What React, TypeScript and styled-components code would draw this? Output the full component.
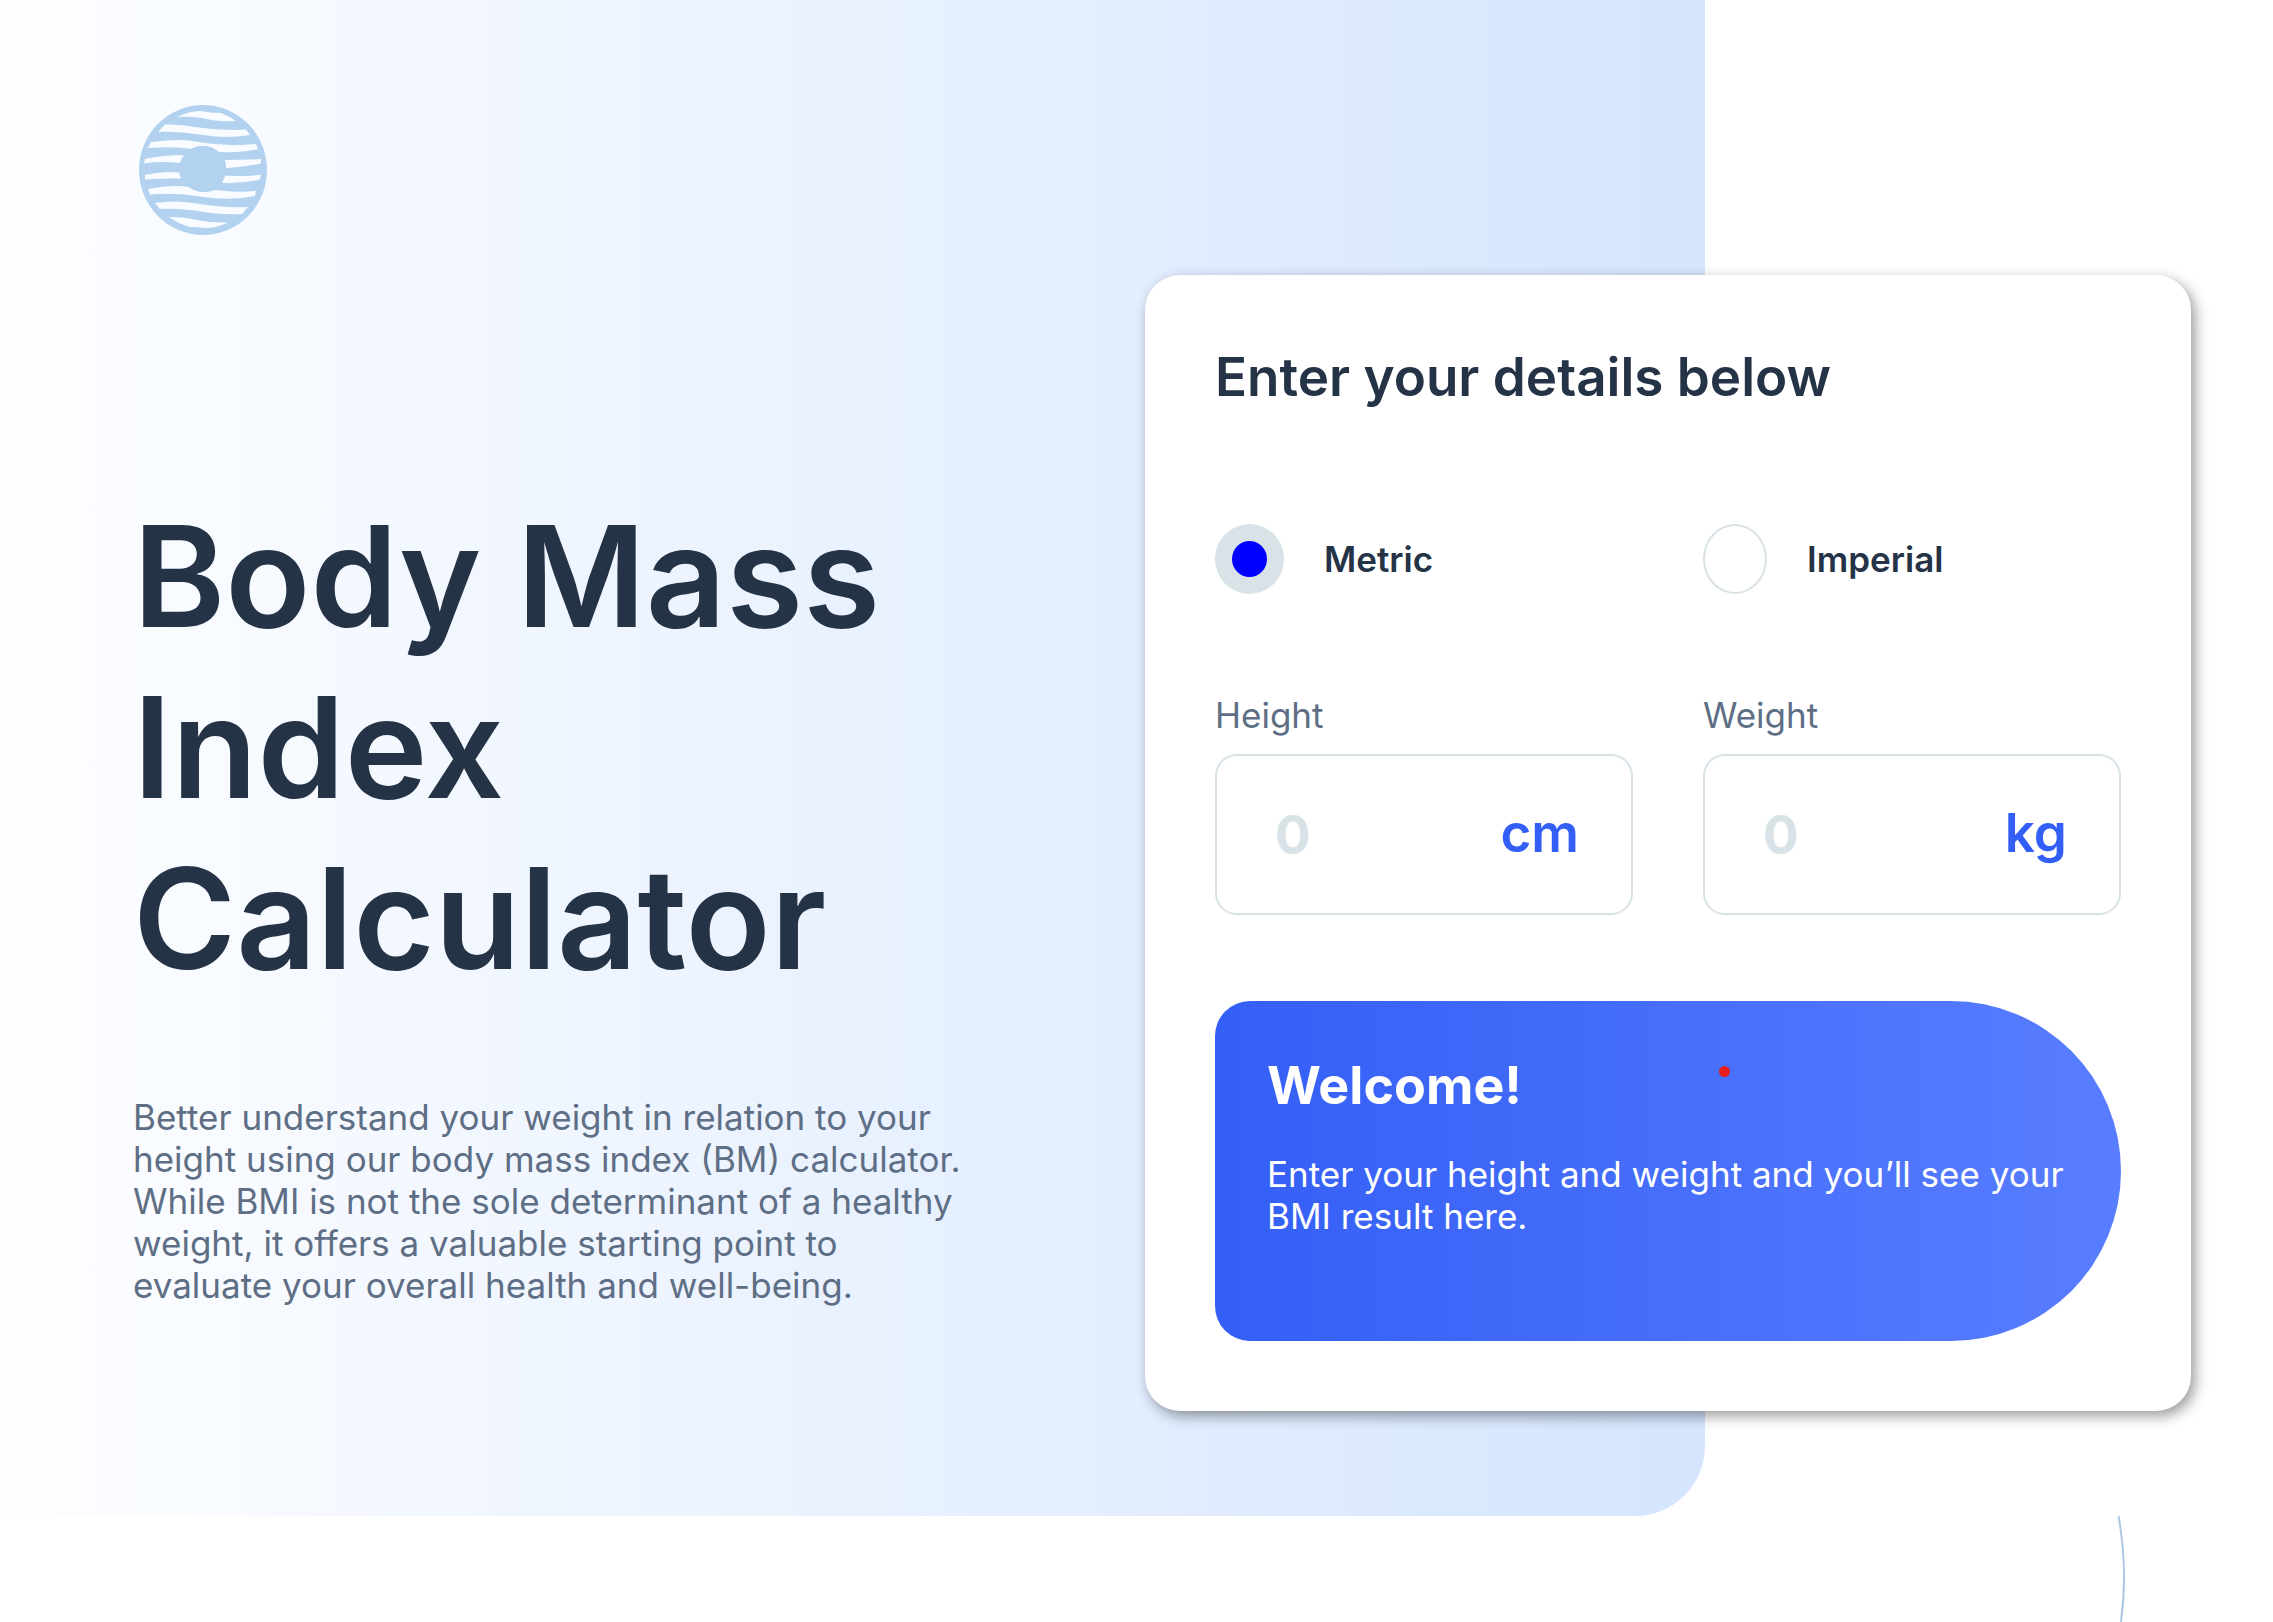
import React, { useState } from "react";
import styled, { createGlobalStyle } from "styled-components";

const ink = "#253347";
const muted = "#5e6e85";
const line = "#d8e2e7";
const blue = "#345ff6";

const GlobalStyle = createGlobalStyle`
  *, *::before, *::after { box-sizing: border-box; }
  body {
    margin: 0;
    background: #fff;
    color: ${ink};
    font-family: Inter, "Liberation Sans", sans-serif;
    font-size: 35px;
    line-height: 42px;
  }
  h1, h2, p, fieldset { margin: 0; padding: 0; border: 0; }
`;

const Page = styled.div`
  min-height: 100vh;
  display: flex;
  flex-direction: column;
`;

const Hero = styled.main`
  display: grid;
`;

const Backdrop = styled.div`
  grid-area: 1 / 1;
  width: 75%;
  border-radius: 0 0 70px 0;
  background: linear-gradient(to right, #fdfeff, #d5e5fe);
`;

const Content = styled.div`
  grid-area: 1 / 1;
  display: grid;
  grid-template-columns: minmax(0, 1012fr) minmax(0, 1046fr);
  padding: 105px 82px 105px 133px;
`;

const Intro = styled.section`
  display: flex;
  flex-direction: column;
  align-items: flex-start;
`;

const Logo = styled.svg`
  width: 140px;
  height: 130px;
`;

const Title = styled.h1`
  max-width: 840px;
  margin-top: 256px;
  font-size: 140px;
  font-weight: 600;
  line-height: 171px;
`;

const Lead = styled.p`
  max-width: 840px;
  margin-top: 92px;
  color: ${muted};
`;

const Card = styled.form`
  margin-top: 170px;
  padding: 70px;
  border-radius: 35px;
  background: #fff;
  box-shadow: 4px 5px 14px rgba(0, 0, 0, 0.4);
`;

const CardTitle = styled.h2`
  font-size: 53px;
  font-weight: 600;
  line-height: 64px;
`;

const Columns = styled.fieldset`
  display: grid;
  grid-template-columns: repeat(2, minmax(0, 1fr));
  column-gap: 70px;
`;

const Units = styled(Columns)`
  margin-top: 115px;
`;

const Measures = styled(Columns)`
  margin-top: 100px;
`;

const Option = styled.label`
  display: flex;
  align-items: center;
  gap: 40px;
  font-weight: 600;
`;

const Radio = styled.input`
  appearance: none;
  width: 64px;
  height: 70px;
  margin: 0;
  border: 2px solid ${line};
  border-radius: 50%;
  &:checked {
    width: 69px;
    border: 17px solid ${line};
    background: #00f;
  }
`;

const Field = styled.div`
  display: flex;
  flex-direction: column;
  gap: 18px;
`;

const FieldLabel = styled.label`
  color: ${muted};
`;

const Box = styled.div`
  display: flex;
  align-items: center;
  height: 161px;
  padding: 0 52px 0 58px;
  border: 2px solid ${line};
  border-radius: 22px;
`;

const NumberInput = styled.input`
  flex: 1;
  min-width: 0;
  padding: 0;
  border: 0;
  outline: 0;
  background: none;
  color: ${ink};
  font: 700 53px/64px Inter, "Liberation Sans", sans-serif;
  &::placeholder { color: ${line}; opacity: 1; }
`;

const Unit = styled.span`
  padding-bottom: 4px;
  color: ${blue};
  font-size: 53px;
  font-weight: 600;
  line-height: 64px;
`;

const Result = styled.section`
  position: relative;
  min-height: 340px;
  margin-top: 86px;
  padding: 53px 52px;
  border-radius: 35px 170px 170px 35px;
  background: linear-gradient(to right, #345ff6, #587dff);
  color: #fff;
`;

const ResultTitle = styled.h2`
  font-size: 52px;
  font-weight: 700;
  line-height: 64px;
`;

const ResultText = styled.p`
  margin-top: 35px;
`;

const Marker = styled.i`
  position: absolute;
  top: 65px;
  left: 504px;
  width: 11px;
  height: 11px;
  border-radius: 50%;
  background: #e71d1d;
`;

const Footer = styled.footer`
  flex: 1;
  display: flex;
  justify-content: flex-end;
  align-items: flex-start;
  padding-right: 148px;
`;

const Arc = styled.svg`
  display: block;
  width: 340px;
  height: 106px;
`;

function BrandMark() {
  return (
    <Logo viewBox="0 0 140 130" role="img" aria-label="Body Mass Index Calculator">
      <ellipse cx="70" cy="65" rx="64" ry="65" fill="#b3d2ef" />
      <g fill="#f8fbff">
        <path d="M44 12 Q56 6 67 6 Q78 8 88 8 Q96 11 103 16 Q92 17 78 15 Q62 11 44 12Z" />
        <path d="M32 19.500 Q48 19 62 22 Q88 26 113 24.500 L117 30 Q92 34 66 29.500 Q44 26 25 27Z" />
        <path d="M18 37 Q48 33 66 37 Q94 42 123 39 L125 44 Q108 48 86 47 Q79 41 70 41 Q62 41 58 44 Q42 41 15 43Z" />
        <path d="M12 54 Q30 50 51 50 Q48 54 47 58 Q28 56 11 58.500Z" />
        <path d="M92 55 Q112 55 128 54 L128 58.500 Q112 62 93 63Z" />
        <path d="M12 70 Q30 66 46 67.500 L48 73.500 Q30 73 12 74.500Z" />
        <path d="M92 70.500 Q112 72 128 69.500 L127 74.500 Q110 78.500 89 78Z" />
        <path d="M15 84 Q38 79 58 82 Q64 87 71 87 Q77 87 82 85 Q102 88 123 86 L122 91 Q98 96 70 92 Q42 87 17 89.500Z" />
        <path d="M22 98 Q42 95 60 98 Q88 103 115 102 L109 109 Q84 110 62 105.500 Q42 103 27 104Z" />
        <path d="M36 112 Q52 112 64 115 Q78 118 95 117.500 Q84 123 72 123 Q64 122 57 122 Q44 118 36 112Z" />
      </g>
      <circle cx="70" cy="64" r="23" fill="#b3d2ef" />
    </Logo>
  );
}

interface MeasureProps {
  id: string;
  label: string;
  unit: string;
}

function Measure({ id, label, unit }: MeasureProps) {
  return (
    <Field>
      <FieldLabel htmlFor={id}>{label}</FieldLabel>
      <Box>
        <NumberInput id={id} inputMode="decimal" placeholder="0" />
        <Unit>{unit}</Unit>
      </Box>
    </Field>
  );
}

export default function App() {
  const [system, setSystem] = useState("metric");
  const metric = system === "metric";
  return (
    <>
      <GlobalStyle />
      <Page>
        <Hero>
          <Backdrop />
          <Content>
            <Intro>
              <BrandMark />
              <Title>Body Mass Index Calculator</Title>
              <Lead>
                Better understand your weight in relation to your height using our body mass index (BM) calculator.
                While BMI is not the sole determinant of a healthy weight, it offers a valuable starting point to
                evaluate your overall health and well-being.
              </Lead>
            </Intro>
            <Card>
              <CardTitle>Enter your details below</CardTitle>
              <Units>
                <Option>
                  <Radio type="radio" name="system" checked={metric} onChange={() => setSystem("metric")} />
                  Metric
                </Option>
                <Option>
                  <Radio type="radio" name="system" checked={!metric} onChange={() => setSystem("imperial")} />
                  Imperial
                </Option>
              </Units>
              <Measures>
                <Measure id="height" label="Height" unit={metric ? "cm" : "in"} />
                <Measure id="weight" label="Weight" unit={metric ? "kg" : "lb"} />
              </Measures>
              <Result>
                <ResultTitle>Welcome!</ResultTitle>
                <ResultText>Enter your height and weight and you’ll see your BMI result here.</ResultText>
                <Marker />
              </Result>
            </Card>
          </Content>
        </Hero>
        <Footer>
          <Arc viewBox="0 0 340 106" fill="none" aria-hidden="true">
            <path d="M333.500 0 A339 339 0 0 1 336 106" stroke="#adc6e2" strokeWidth="2" />
          </Arc>
        </Footer>
      </Page>
    </>
  );
}
